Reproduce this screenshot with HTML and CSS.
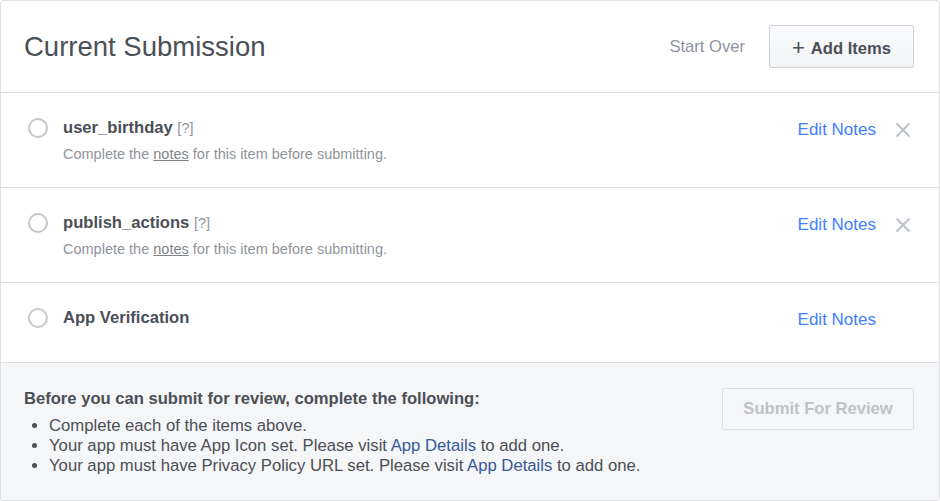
FILE: index.html
```html
<!DOCTYPE html>
<html lang="en">
<head>
    <meta charset="UTF-8">
    <title>Current Submission</title>
    <link rel="stylesheet" href="styles.css">
</head>
<body>
    <div class="card">
        <div class="header">
            <h1>Current Submission</h1>
            <div class="header-actions">
                <a class="start-over">Start Over</a>
                <button class="add-button"><span class="plus">+</span> Add Items</button>
            </div>
        </div>

        <div class="item">
            <span class="radio"></span>
            <div class="item-body">
                <div class="item-title">user_birthday <span class="help">[?]</span></div>
                <div class="item-note">Complete the <u>notes</u> for this item before submitting.</div>
            </div>
            <a class="edit-notes">Edit Notes</a>
            <span class="remove">
                <svg width="16" height="16" viewBox="0 0 16 16"><path d="M1.5 1.5 L14.5 14.5 M14.5 1.5 L1.5 14.5" stroke="#bec2c9" stroke-width="2" fill="none"/></svg>
            </span>
        </div>

        <div class="item">
            <span class="radio"></span>
            <div class="item-body">
                <div class="item-title">publish_actions <span class="help">[?]</span></div>
                <div class="item-note">Complete the <u>notes</u> for this item before submitting.</div>
            </div>
            <a class="edit-notes">Edit Notes</a>
            <span class="remove">
                <svg width="16" height="16" viewBox="0 0 16 16"><path d="M1.5 1.5 L14.5 14.5 M14.5 1.5 L1.5 14.5" stroke="#bec2c9" stroke-width="2" fill="none"/></svg>
            </span>
        </div>

        <div class="item item-single">
            <span class="radio"></span>
            <div class="item-body">
                <div class="item-title">App Verification</div>
            </div>
            <a class="edit-notes">Edit Notes</a>
            <span class="remove"></span>
        </div>

        <div class="footer">
            <div class="requirements">
                <div class="requirements-title">Before you can submit for review, complete the following:</div>
                <ul>
                    <li>Complete each of the items above.</li>
                    <li>Your app must have App Icon set. Please visit <a>App Details</a> to add one.</li>
                    <li>Your app must have Privacy Policy URL set. Please visit <a>App Details</a> to add one.</li>
                </ul>
            </div>
            <button class="submit-button" disabled>Submit For Review</button>
        </div>
    </div>
</body>
</html>
```

FILE: styles.css
```css
body {
    margin: 0;
    font-family: 'Liberation Sans', Arial, sans-serif;
    color: #4b4f56;
    background-color: #fff;
}

.card {
    width: 940px;
    height: 501px;
    box-sizing: border-box;
    border: 1px solid #dddfe2;
    border-radius: 3px;
    overflow: hidden;
    display: flex;
    flex-direction: column;
}

.header {
    height: 92px;
    flex-shrink: 0;
    box-sizing: border-box;
    padding: 0 25px 0 24px;
    display: flex;
    justify-content: space-between;
    align-items: center;
    border-bottom: 1px solid #dddfe2;
}

.header h1 {
    margin: 0 0 0 -1px;
    font-size: 27.5px;
    font-weight: normal;
    color: #4b4f56;
}

.header-actions {
    display: flex;
    align-items: center;
    gap: 24px;
}

.start-over {
    font-size: 16.6px;
    color: #90949c;
}

.add-button {
    width: 145px;
    height: 43px;
    border: 1px solid #ced0d4;
    border-radius: 2px;
    background: linear-gradient(#fafbfc, #f2f3f5);
    font-family: inherit;
    font-size: 16.6px;
    font-weight: bold;
    color: #4b4f56;
}

.add-button .plus {
    font-weight: normal;
    font-size: 22px;
    position: relative;
    top: 1px;
    margin-right: 2px;
}

.item {
    display: flex;
    align-items: flex-start;
    padding: 25px 28px 24px 27px;
    border-bottom: 1px solid #dddfe2;
}

.item-single {
    padding-bottom: 32px;
}

.radio {
    width: 16px;
    height: 16px;
    border: 2px solid #c4c7cc;
    border-radius: 50%;
    flex-shrink: 0;
}

.item-body {
    flex: 1;
    margin-left: 15px;
}

.item-title {
    font-size: 16.6px;
    font-weight: bold;
    line-height: 20px;
    color: #4b4f56;
}

.help {
    font-size: 14.5px;
    font-weight: normal;
    color: #90949c;
}

.item-note {
    margin-top: 7px;
    font-size: 14.5px;
    line-height: 18px;
    color: #90949c;
}

.item-note u {
    color: #7f838b;
}

.edit-notes {
    font-size: 17px;
    line-height: 20px;
    color: #4080ff;
    margin-top: 2px;
}

.remove {
    width: 16px;
    height: 16px;
    margin: 4px 0 0 19px;
}

.remove svg {
    display: block;
}

.footer {
    flex: 1;
    box-sizing: border-box;
    background-color: #f5f6f7;
    padding: 26px 25px 0 23px;
    display: flex;
    justify-content: space-between;
    align-items: flex-start;
}

.requirements-title {
    font-size: 16.6px;
    font-weight: bold;
    line-height: 20px;
}

.requirements ul {
    margin: 7px 0 0 0;
    padding-left: 25px;
    font-size: 16.7px;
    line-height: 20px;
}

.requirements a {
    color: #365899;
}

.submit-button {
    width: 192px;
    height: 42px;
    margin-top: -1px;
    border: 1px solid #dddfe2;
    border-radius: 2px;
    background-color: #f5f6f7;
    font-family: inherit;
    font-size: 16.6px;
    font-weight: bold;
    color: #bec2c9;
}
```
